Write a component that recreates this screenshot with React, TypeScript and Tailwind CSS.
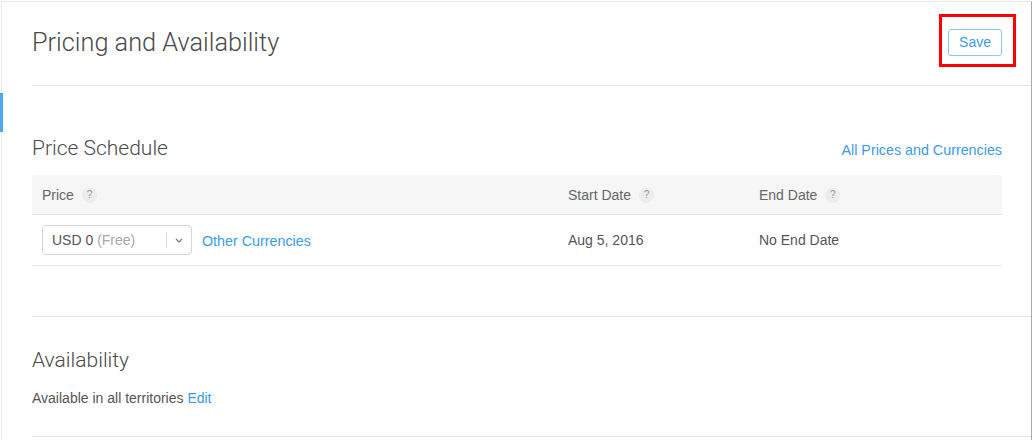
import React from "react";

const Q = () => (
  <span className="ml-2 inline-flex h-[15px] w-[15px] items-center justify-center rounded-full bg-[#ececec] text-[10px] leading-none text-[#999]">
    ?
  </span>
);

export default function App() {
  return (
    <div className="relative h-[440px] w-[1033px] overflow-hidden bg-white font-['Liberation_Sans',Arial,sans-serif] text-[14px] text-[#555]">
      <div className="ml-px mt-px h-[439px] w-[1031px] border-l border-t border-r border-l-[#e8e8e8] border-t-[#e8e8e8] border-r-[#a9a9a9]">
        <div className="pl-[30px]">
          {/* header */}
          <div className="flex h-[84px] items-center justify-between border-b border-[#e6e6e6] pr-[29px]">
            <h1 className="mt-[-2px] font-['Roboto',sans-serif] text-[25.3px] font-light text-[#4a4a4a]">
              Pricing and Availability
            </h1>
            <button className="mt-[-3px] h-[27px] rounded-[3px] border border-[#8cc6f7] px-[10px] text-[14px] text-[#3a9bf0]">
              Save
            </button>
          </div>

          <div className="pr-[29px]">
            {/* Price schedule */}
            <div className="flex h-[89px] items-end justify-between pb-[11px]">
              <h2 className="font-['Roboto',sans-serif] text-[21px] font-light text-[#4a4a4a]">Price Schedule</h2>
              <a className="mb-[3px] text-[14.3px] text-[#3a9bf0]">All Prices and Currencies</a>
            </div>
            <div>
              <div className="grid h-[40px] grid-cols-[526px_191px_1fr] items-center rounded-t-[4px] border-b border-[#e6e6e6] bg-[#f6f6f6] px-[10px] pt-px text-[#666]">
                <div className="flex items-center">Price<Q /></div>
                <div className="flex items-center">Start Date<Q /></div>
                <div className="flex items-center">End Date<Q /></div>
              </div>
              <div className="grid h-[51px] grid-cols-[526px_191px_1fr] items-center border-b border-[#e6e6e6] px-[10px]">
                <div className="flex items-center">
                  <div className="flex h-[30px] w-[150px] items-center rounded-[4px] border border-[#d6d6d6]">
                    <span className="flex-1 pl-[9px] text-[#555]">
                      USD 0 <span className="text-[#aaa]">(Free)</span>
                    </span>
                    <span className="h-[16px] w-px bg-[#e0e0e0]" />
                    <span className="flex w-[24px] justify-center">
                      <svg width="8" height="5" viewBox="0 0 8 5">
                        <path d="M1 1l3 3 3-3" stroke="#777" strokeWidth="1.2" fill="none" />
                      </svg>
                    </span>
                  </div>
                  <a className="ml-[10px] mt-[3px] text-[14.3px] text-[#3a9bf0]">Other Currencies</a>
                </div>
                <div>Aug 5, 2016</div>
                <div>No End Date</div>
              </div>
            </div>
          </div>

          {/* Availability */}
          <div className="mt-[50px] border-t border-[#e6e6e6]">
            <h2 className="mt-[28px] font-['Roboto',sans-serif] text-[21px] font-light text-[#4a4a4a]">Availability</h2>
            <p className="mt-[11px] text-[#555]">
              Available in all territories <a className="text-[#3a9bf0]">Edit</a>
            </p>
            <div className="mt-[27px] border-t border-[#e6e6e6]" />
          </div>
        </div>
      </div>

      {/* blue indicator */}
      <div className="absolute left-0 top-[93px] h-[39px] w-[3px] bg-[#4aa8f8]" />
      {/* red annotation box */}
      <div className="pointer-events-none absolute left-[939px] top-[14px] h-[53px] w-[77px] border-[3px] border-[#ff0000]" />
    </div>
  );
}
